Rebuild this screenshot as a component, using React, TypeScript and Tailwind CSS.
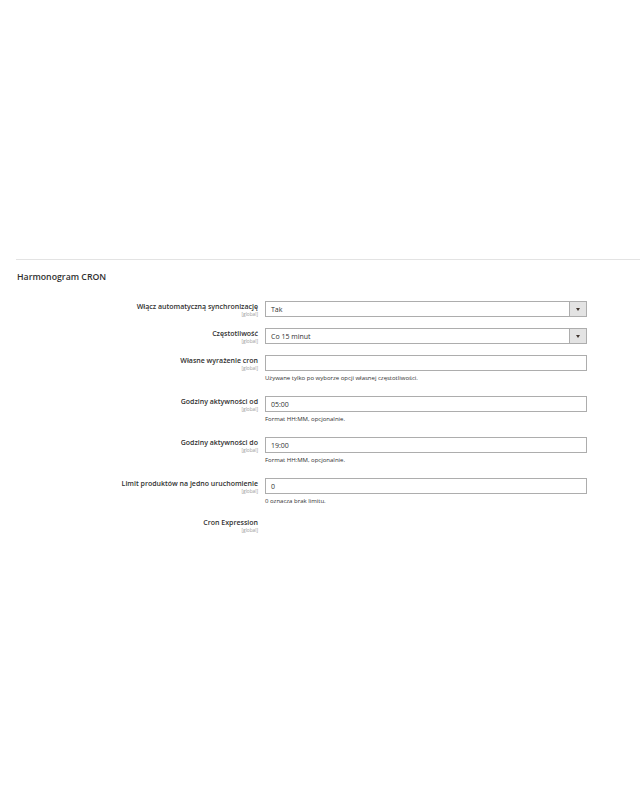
import React from 'react';

type Row = {
  label: string;
  kind: 'select' | 'input' | 'none';
  value?: string;
  hint?: string;
};

const rows: Row[] = [
  { label: 'Włącz automatyczną synchronizację', kind: 'select', value: 'Tak' },
  { label: 'Częstotliwość', kind: 'select', value: 'Co 15 minut' },
  {
    label: 'Własne wyrażenie cron',
    kind: 'input',
    value: '',
    hint: 'Używane tylko po wyborze opcji własnej częstotliwości.',
  },
  { label: 'Godziny aktywności od', kind: 'input', value: '05:00', hint: 'Format HH:MM, opcjonalnie.' },
  { label: 'Godziny aktywności do', kind: 'input', value: '19:00', hint: 'Format HH:MM, opcjonalnie.' },
  {
    label: 'Limit produktów na jedno uruchomienie',
    kind: 'input',
    value: '0',
    hint: '0 oznacza brak limitu.',
  },
  { label: 'Cron Expression', kind: 'none' },
];

function Field({ row }: { row: Row }) {
  if (row.kind === 'none') return <div />;
  return (
    <div>
      <div className="relative flex h-[16px] w-[322px] items-center border border-[#adadad] bg-white">
        <span className="pl-[5px] text-[7px] leading-none text-[#303030]">{row.value}</span>
        {row.kind === 'select' && (
          <div className="absolute right-0 top-0 flex h-full w-[17px] items-center justify-center border-l border-[#adadad] bg-[#e3e3e3]">
            <span className="block h-0 w-0 border-x-[2.5px] border-t-[3px] border-x-transparent border-t-[#41362f]" />
          </div>
        )}
      </div>
      {row.hint && <div className="mt-[3px] pb-[3px] text-[6px] leading-[8px] text-[#303030]">{row.hint}</div>}
    </div>
  );
}

export default function App() {
  return (
    <div className="min-h-[800px] bg-white" style={{ fontFamily: '"Open Sans", "Liberation Sans", sans-serif' }}>
      <div className="h-[259px]" />
      <div className="ml-[16px] border-t border-[#e3e3e3] pt-[10px]">
        <h2 className="pl-[1px] text-[8.75px] font-semibold leading-[14px] text-[#303030]">Harmonogram CRON</h2>
        <div className="mt-[17px] flex flex-col gap-[11px]">
          {rows.map((row) => (
            <div key={row.label} className={row.kind === 'none' ? 'flex gap-[7px] -mt-[2px]' : 'flex gap-[7px]'}>
              <div className="h-[16px] w-[242px] pt-[2px] text-right">
                <div className="text-[7px] font-semibold leading-[8px] text-[#303030]">{row.label}</div>
                <div className="text-[4.75px] leading-[6px] text-[#999999]">[global]</div>
              </div>
              <Field row={row} />
            </div>
          ))}
        </div>
      </div>
    </div>
  );
}
